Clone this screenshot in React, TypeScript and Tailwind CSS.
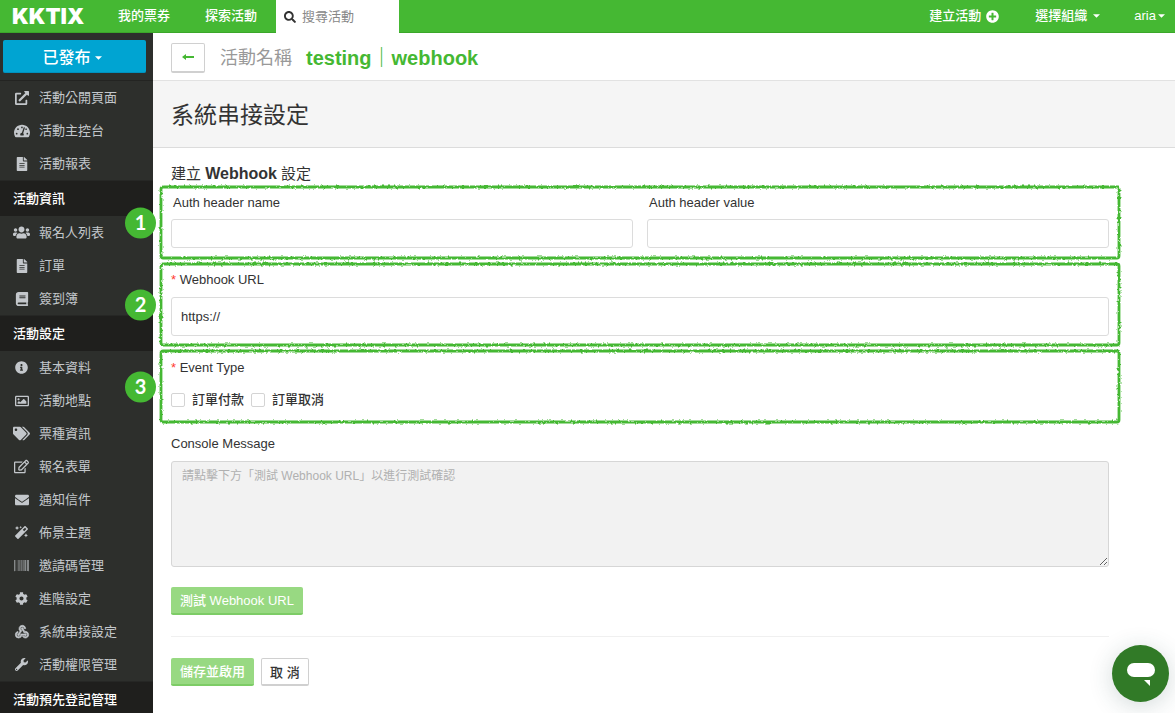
import { useState, type ReactNode } from 'react'
import type { IconType } from 'react-icons'
import {
  FaBarcode, FaBook, FaCog, FaEnvelope, FaExternalLinkAlt, FaFileAlt, FaInfoCircle, FaMagic,
  FaPlusCircle, FaRegEdit, FaRegImage, FaSearch, FaTachometerAlt, FaTags, FaUsers, FaWrench
} from 'react-icons/fa'
import { MdWebhook } from 'react-icons/md'

type MenuItem = { label: string; icon: IconType; size?: number; look?: string }
type MenuGroup = { title?: string; items: MenuItem[] }

const menu: MenuGroup[] = [
  {
    items: [
      { label: '活動公開頁面', icon: FaExternalLinkAlt },
      { label: '活動主控台', icon: FaTachometerAlt, size: 16 },
      { label: '活動報表', icon: FaFileAlt, size: 14 }
    ]
  },
  {
    title: '活動資訊',
    items: [
      { label: '報名人列表', icon: FaUsers, size: 17 },
      { label: '訂單', icon: FaFileAlt, size: 14 },
      { label: '簽到簿', icon: FaBook, size: 14 }
    ]
  },
  {
    title: '活動設定',
    items: [
      { label: '基本資料', icon: FaInfoCircle, size: 13 },
      { label: '活動地點', icon: FaRegImage },
      { label: '票種資訊', icon: FaTags, size: 17 },
      { label: '報名表單', icon: FaRegEdit, size: 15 },
      { label: '通知信件', icon: FaEnvelope },
      { label: '佈景主題', icon: FaMagic, size: 13 },
      { label: '邀請碼管理', icon: FaBarcode, size: 15, look: 'opacity-80' },
      { label: '進階設定', icon: FaCog, size: 13 },
      // the icon's first path is its bounding box, so only the last one gets the heavier outline
      { label: '系統串接設定', icon: MdWebhook, size: 16, look: '[&_path:last-child]:stroke-current [&_path:last-child]:stroke-1' },
      { label: '活動權限管理', icon: FaWrench, size: 13 }
    ]
  },
  { title: '活動預先登記管理', items: [] }
]

function Caret() {
  return (
    <svg width="7" height="4" viewBox="0 0 8 4" fill="currentColor" aria-hidden="true">
      <path d="M0 0h8L4 4z" />
    </svg>
  )
}

function TopBar() {
  return (
    <header className="flex h-[33px] shrink-0 items-stretch border-b border-[#3ba72a] bg-[#45b833] text-[13px] font-medium text-white">
      <a href="#" className="flex w-[102px] items-center pl-3 font-[Inter,sans-serif] text-[22px] font-black">KKTIX</a>
      <nav className="flex">
        <a href="#" className="flex items-center px-4">我的票券</a>
        <a href="#" className="flex items-center px-[19px]">探索活動</a>
      </nav>
      <label className="flex h-[33px] w-[123px] items-center gap-[6px] bg-white px-2 text-[#333]">
        <FaSearch size={12} className="shrink-0" />
        <input
          type="search"
          aria-label="搜尋活動"
          placeholder="搜尋活動"
          className="w-full min-w-0 font-normal outline-none placeholder:text-[#888]"
        />
      </label>
      <nav className="ml-auto flex">
        <a href="#" className="flex items-center gap-[5px] px-4">
          建立活動 <FaPlusCircle size={13} />
        </a>
        <button className="flex items-center gap-[6px] pl-5 pr-4">選擇組織 <Caret /></button>
        <button className="flex items-center gap-[2px] pl-[18px] pr-[10px]">aria<Caret /></button>
      </nav>
    </header>
  )
}

function Sidebar() {
  return (
    <aside className="flex w-[153px] shrink-0 flex-col overflow-hidden bg-[#2d2f2c] text-[13px] text-[#c3c7cb]">
      <div className="shrink-0 border-b border-[#232422] px-[3px] py-[7px]">
        <button className="flex h-[33px] w-full max-w-[143px] items-center justify-center gap-1 rounded-xs border-b border-[#0092bf] bg-[#00a4d2] pr-[5px] pt-[3px] text-base font-medium text-white">
          已發布 <Caret />
        </button>
      </div>
      {menu.map((group, i) => (
        <section key={i} className="shrink-0">
          {group.title && (
            <h3 className="flex h-9 items-center border-t border-[#262725] bg-[#1f1f1d] pl-[13px] font-medium text-white">
              {group.title}
            </h3>
          )}
          <ul>
            {group.items.map(({ label, icon: Icon, size = 14, look }) => (
              <li key={label}>
                <a href="#" className="flex h-[33px] items-center gap-[9px] pl-[13px]">
                  <span className="flex w-[17px] justify-center">
                    <Icon size={size} className={look} />
                  </span>
                  {label}
                </a>
              </li>
            ))}
          </ul>
        </section>
      ))}
    </aside>
  )
}

// hand-drawn looking frame with a step number hanging off the left edge
function Step({ no, className, children }: { no: number; className: string; children: ReactNode }) {
  return (
    <div className={`relative px-[10px] ${className}`}>
      <svg className="pointer-events-none absolute inset-0 size-full overflow-visible" aria-hidden="true">
        <filter id={`brush${no}`} filterUnits="userSpaceOnUse" x="-5" y="-5" width="2000" height="200" colorInterpolationFilters="sRGB">
          <feTurbulence type="fractalNoise" baseFrequency="0.4" numOctaves="2" seed={no} result="noise" />
          <feDisplacementMap in="SourceGraphic" in2="noise" scale="3" xChannelSelector="R" yChannelSelector="G" />
        </filter>
        <rect width="100%" height="100%" rx="2" fill="none" stroke="#45b833" strokeWidth="2.8" filter={`url(#brush${no})`} />
      </svg>
      <span className="absolute -left-9 top-1/2 flex size-[31px] -translate-y-1/2 items-center justify-center rounded-full bg-[#45b833] pb-[2px] font-[Lato,sans-serif] text-xl font-bold text-white">
        {no}
      </span>
      {children}
    </div>
  )
}

function Required() {
  return <span className="text-[#ff3b30]">* </span>
}

const field = 'block w-full rounded-[3px] border border-[#dcdcdc] bg-white px-[9px] outline-none'
const greenButton = 'h-7 rounded-xs border-b-2 border-[#7dcc66] bg-[#98d982] px-[9px] pt-[2px] font-medium text-white'

function WebhookForm() {
  const [url, setUrl] = useState('https://')
  const [events, setEvents] = useState<string[]>([])

  function toggle(name: string) {
    setEvents(events.includes(name) ? events.filter((e) => e !== name) : [...events, name])
  }

  return (
    <form className="pb-6 pl-2 pr-14 pt-4 text-[13px] leading-5 text-[#333]" onSubmit={(e) => e.preventDefault()}>
      <h2 className="mb-[3px] px-[10px] text-[15px] leading-5">
        建立 <b className="text-base leading-5">Webhook</b> 設定
      </h2>

      <div className="flex flex-col gap-[6px]">
        <Step no={1} className="grid grid-cols-2 gap-[14px] pb-[10px] pt-[6px]">
          <div>
            <label htmlFor="auth-name" className="mb-[6px] block pl-[2px]">Auth header name</label>
            <input id="auth-name" className={`h-[29px] ${field}`} />
          </div>
          <div>
            <label htmlFor="auth-value" className="mb-[6px] block pl-[2px]">Auth header value</label>
            <input id="auth-value" className={`h-[29px] ${field}`} />
          </div>
        </Step>

        <Step no={2} className="pb-[9px] pt-[6px]">
          <label htmlFor="url" className="mb-[7px] block"><Required />Webhook URL</label>
          <input id="url" value={url} onChange={(e) => setUrl(e.target.value)} className={`h-[39px] ${field}`} />
        </Step>

        <Step no={3} className="pb-3 pt-[7px]">
          <fieldset>
            <legend className="mb-3"><Required />Event Type</legend>
            <div className="flex gap-[7px] font-medium">
              {['訂單付款', '訂單取消'].map((name) => (
                <label key={name} className="flex items-center gap-[7px]">
                  <input
                    type="checkbox"
                    checked={events.includes(name)}
                    onChange={() => toggle(name)}
                    className="size-[14px] appearance-none rounded-xs border border-[#d4d4d4] bg-white checked:bg-[#45b833]"
                  />
                  {name}
                </label>
              ))}
            </div>
          </fieldset>
        </Step>
      </div>

      <div className="px-[10px] pt-3">
        <label htmlFor="console" className="mb-[7px] block">Console Message</label>
        <textarea
          id="console"
          readOnly
          placeholder="請點擊下方「測試 Webhook URL」以進行測試確認"
          className="block h-[106px] w-full rounded-[3px] border border-[#d6d6d6] bg-[#f2f2f2] px-[10px] py-1 text-xs leading-5 outline-none placeholder:text-[#b0b0b0]"
        />
        <button type="button" className={`mt-5 ${greenButton}`}>測試 Webhook URL</button>
        <hr className="my-[21px] border-[#f0f0f0]" />
        <div className="flex gap-[7px]">
          <button type="submit" className={greenButton}>儲存並啟用</button>
          <button type="button" className="h-7 rounded-xs border border-b-2 border-[#d0d0d0] bg-white px-2 pt-[2px] font-medium">取 消</button>
        </div>
      </div>
    </form>
  )
}

export default function App() {
  return (
    <div className="flex h-screen flex-col bg-white font-['Liberation_Sans','Noto_Sans_CJK_TC',sans-serif]">
      <TopBar />
      <div className="flex min-h-0 flex-1">
        <Sidebar />
        <main className="min-w-0 flex-1">
          <div className="flex h-12 items-center border-b border-[#e2e2e2] px-[18px] pt-[2px]">
            <a href="#" aria-label="返回" className="flex h-[30px] w-[34px] items-center justify-center rounded-xs border border-b-2 border-[#d0d0d0] text-[#45b833]">
              <svg width="12" height="8" viewBox="0 0 12 8" fill="currentColor" aria-hidden="true">
                <path d="M4 1v2h8v2H4v2L0 4z" />
              </svg>
            </a>
            <span className="ml-[15px] text-lg text-[#999]">活動名稱</span>
            <strong className="ml-[14px] text-xl text-[#45b833]">testing｜webhook</strong>
          </div>
          <div className="flex h-[67px] items-center border-b border-[#dcdcdc] bg-[#f5f5f5] px-[18px] pt-[2px]">
            <h1 className="text-[23px] text-[#333]">系統串接設定</h1>
          </div>
          <WebhookForm />
        </main>
      </div>
      <button
        aria-label="聊天"
        className="fixed bottom-[11px] right-[6px] flex size-[57px] items-center justify-center rounded-full bg-[#317a27] text-white shadow-[0_4px_24px_#23474733]"
      >
        <svg width="28" height="24" viewBox="0 0 28 24" fill="currentColor" aria-hidden="true">
          <rect y="1" width="28" height="14" rx="7" />
          <path d="M17 18h6v6z" />
        </svg>
      </button>
    </div>
  )
}
